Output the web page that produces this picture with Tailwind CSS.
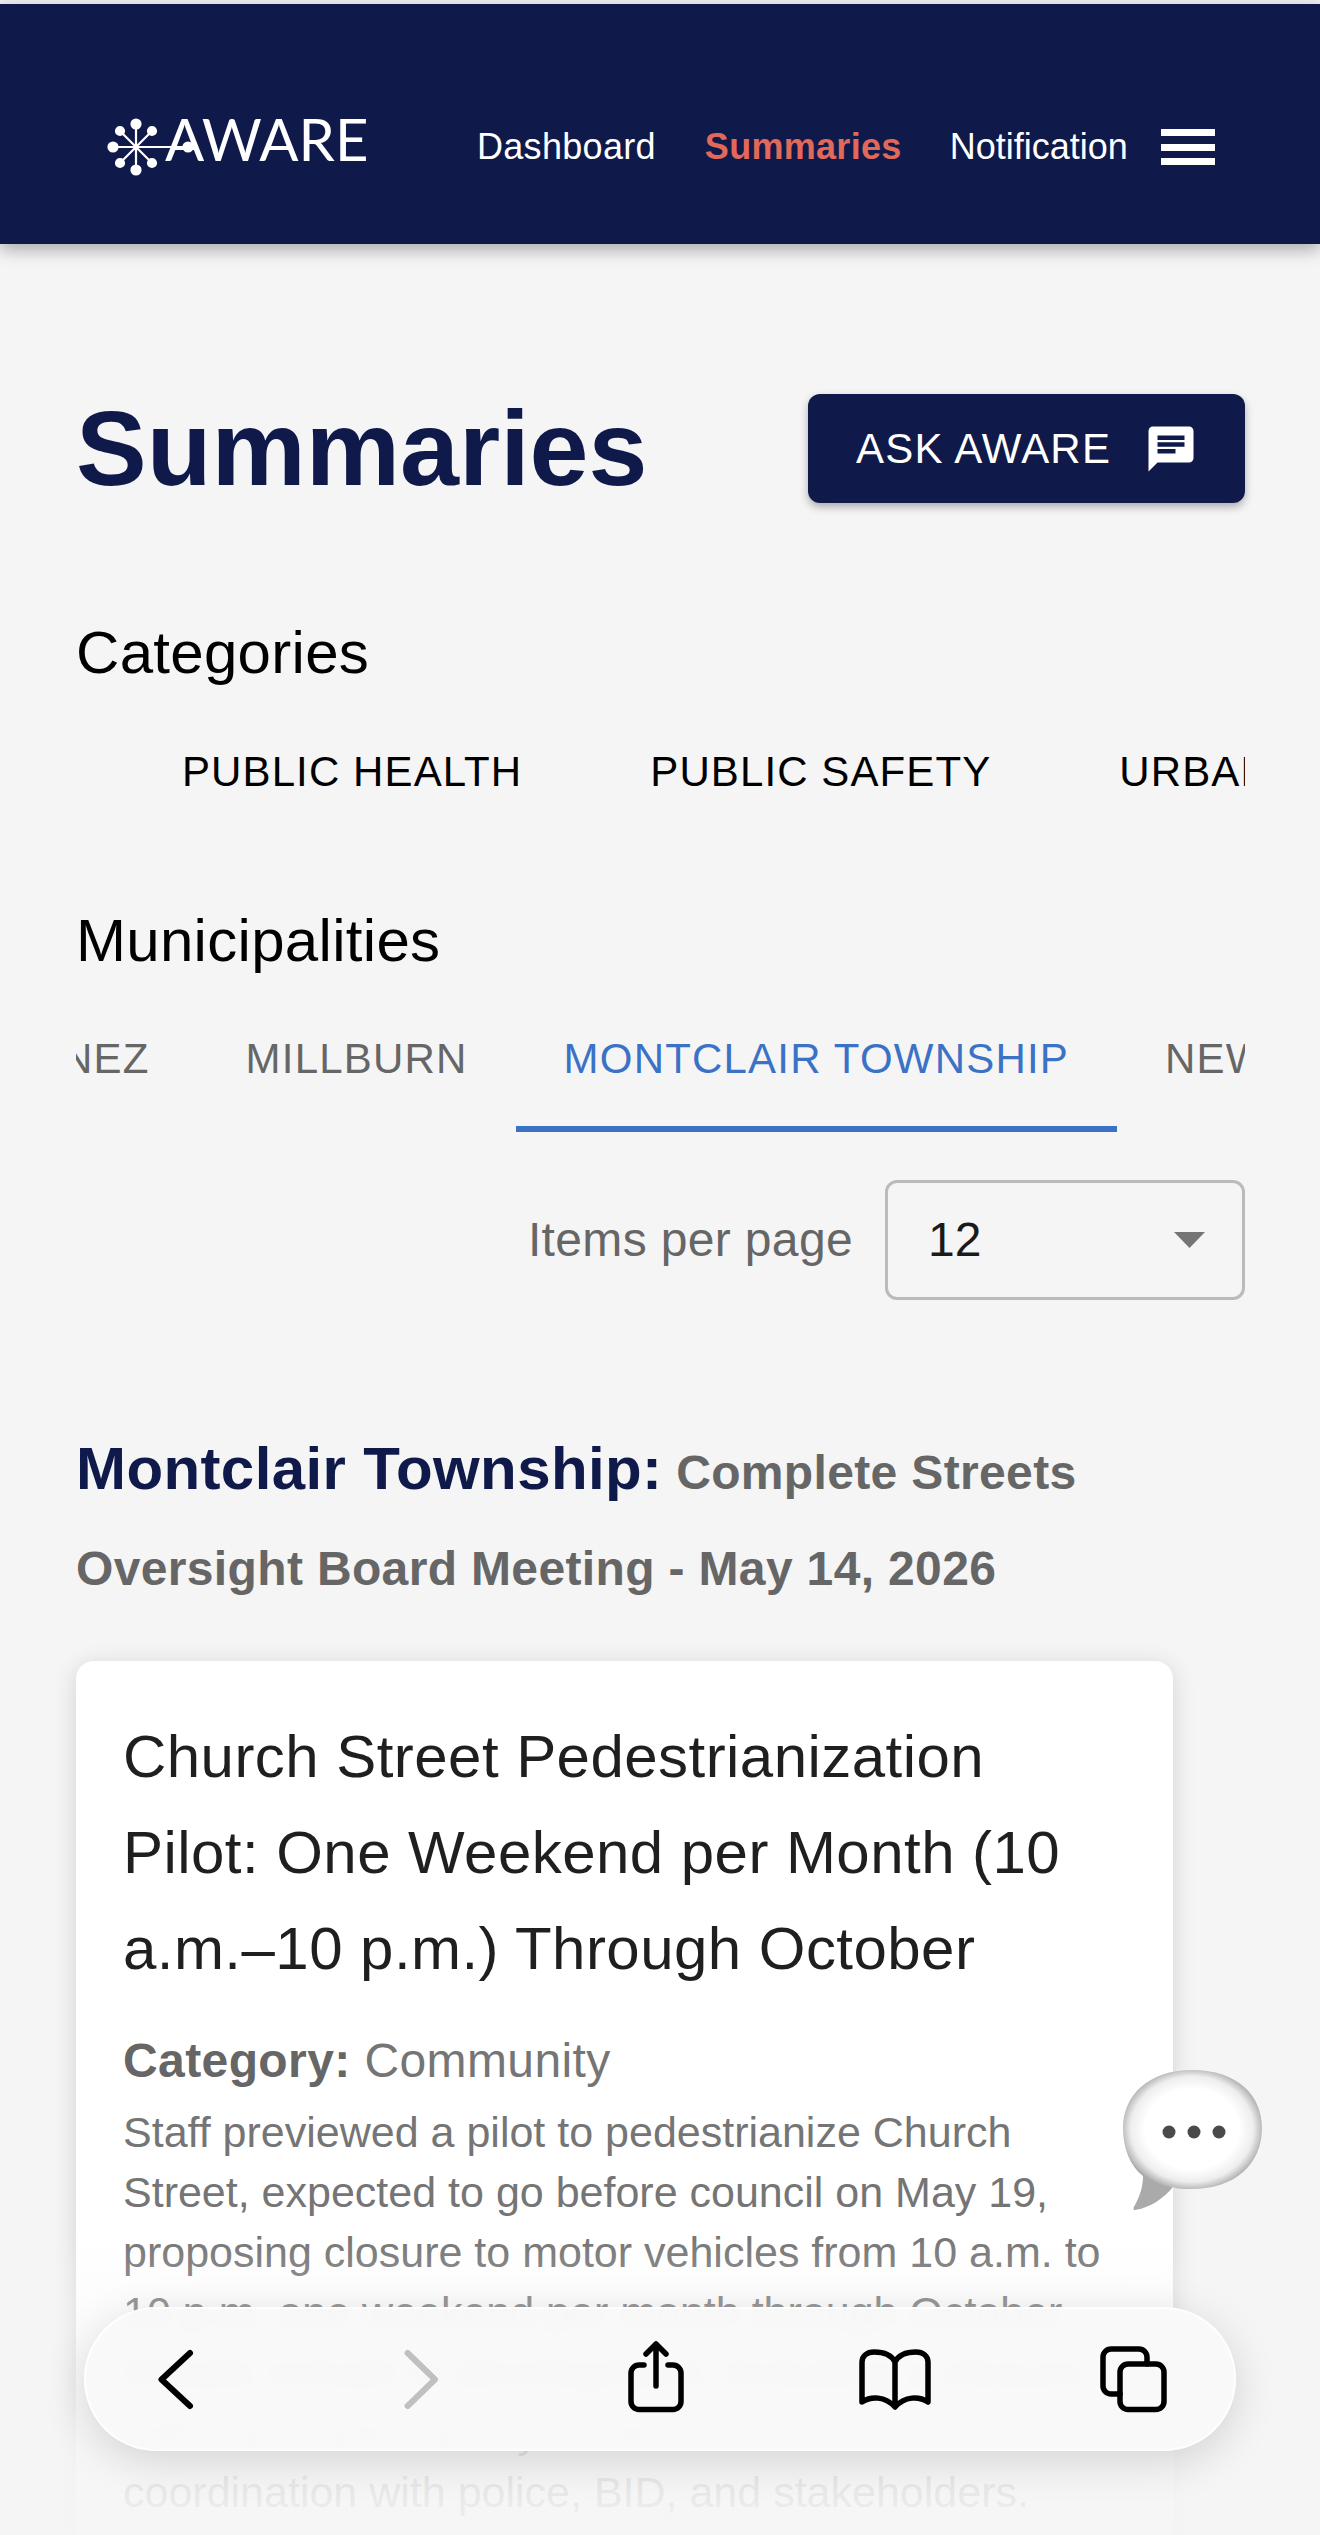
<!DOCTYPE html>
<html lang="en">
<head>
    <meta charset="utf-8" />
    <meta content="width=device-width, initial-scale=1.0" name="viewport" />
    <title>Summaries - AWARE</title>
    <script src="https://cdn.jsdelivr.net/npm/@tailwindcss/browser@4"></script>
</head>
<body class="bg-[#f5f5f5] font-['Liberation_Sans',Arial,sans-serif]">
<div class="relative h-[2535px] w-[1320px] overflow-hidden">
    <div class="h-1 bg-[#eeeef4]"></div>

    <!-- Header -->
    <header class="relative z-10 flex h-[240px] items-center bg-[#0f1a4b] pt-[46px] pl-[107px] text-[36px] leading-none text-white shadow-[0_6px_16px_rgba(0,0,0,0.3)]">
        <div class="flex w-[370px] items-center">
            <svg class="relative z-10 h-[60px] w-[86px]" viewBox="0 0 86 60" fill="#fff" stroke="#fff" stroke-width="2.2">
                <path d="M29 7V53M6 30H81M13 14L45 46M45 14L13 46" />
                <circle cx="29" cy="7" r="4.5" /><circle cx="29" cy="53" r="4.5" />
                <circle cx="6" cy="30" r="4.5" /><circle cx="81" cy="30" r="4.5" />
                <circle cx="13" cy="14" r="4" /><circle cx="45" cy="14" r="4" />
                <circle cx="13" cy="46" r="4" /><circle cx="45" cy="46" r="4" />
            </svg>
            <span class="-mt-[16px] -ml-[28px] font-['Lato',sans-serif] text-[58px] font-normal leading-none">AWARE</span>
        </div>
        <nav class="flex items-center">
            <a class="tracking-[0.3px]">Dashboard</a>
            <a class="ml-[49px] font-bold tracking-[0.3px] text-[#e2685a]">Summaries</a>
            <a class="ml-[48px]">Notification</a>
        </nav>
        <div class="ml-[33px] flex h-[36px] w-[54px] flex-col justify-between">
            <span class="h-[7px] bg-white"></span>
            <span class="h-[7px] bg-white"></span>
            <span class="h-[7px] bg-white"></span>
        </div>
    </header>

    <main class="pl-[76px] pr-[75px]">
        <!-- Title -->
        <div class="flex h-[109px] items-center justify-between mt-[150px]">
            <h1 class="-mt-[2px] text-[106px] font-bold leading-none text-[#0f1a4b]">Summaries</h1>
            <button class="flex h-[109px] w-[437px] items-center rounded-xl bg-[#0f1a4b] pl-[48px] text-[42px] tracking-[1.2px] text-white shadow-[0_4px_8px_rgba(0,0,0,0.3)]">
                ASK AWARE
                <svg class="ml-[33px] h-[54px] w-[54px]" viewBox="0 0 24 24" fill="#fff"><path d="M20 2H4c-1.1 0-1.99.9-1.99 2L2 22l4-4h14c1.1 0 2-.9 2-2V4c0-1.1-.9-2-2-2zM6 9h12v2H6V9zm8 5H6v-2h8v2zm4-6H6V6h12v2z"/></svg>
            </button>
        </div>

        <!-- Categories -->
        <h2 class="mt-[114px] text-[60px] leading-[72px] tracking-[0.3px] text-black">Categories</h2>
        <div class="mt-[47px] overflow-hidden">
            <div class="ml-[42px] flex w-max text-[42px] leading-[72px] tracking-[1.1px] text-black">
                <a class="px-[64px]">PUBLIC HEALTH</a>
                <a class="px-[64px]">PUBLIC SAFETY</a>
                <a class="px-[64px]">URBAN PLANNING</a>
            </div>
        </div>

        <!-- Municipalities -->
        <h2 class="mt-[97px] text-[60px] leading-[72px] tracking-[0.3px] text-black">Municipalities</h2>
        <div class="mt-[11px] overflow-hidden">
            <div class="-ml-[62px] flex w-max text-[42px] leading-none tracking-[1.2px] text-[#666]">
                <a class="flex h-[144px] items-center border-y-[6px] border-transparent px-[48px] pb-[2px]">NEZ</a>
                <a class="flex h-[144px] items-center border-y-[6px] border-transparent px-[48px] pb-[2px]">MILLBURN</a>
                <a class="flex h-[144px] items-center border-y-[6px] border-transparent border-b-[#3b72c6] px-[48px] pb-[2px] text-[#3b72c6]">MONTCLAIR TOWNSHIP</a>
                <a class="flex h-[144px] items-center border-y-[6px] border-transparent px-[48px] pb-[2px]">NEWARK</a>
            </div>
        </div>

        <!-- Items per page -->
        <div class="mt-[48px] flex items-center justify-end gap-[32px]">
            <span class="text-[48px] tracking-[0.35px] text-[#666]">Items per page</span>
            <div class="flex h-[120px] w-[360px] items-center rounded-xl border-[3px] border-[#bbb] pl-[40px] pr-[37px] text-[48px] text-[#1a1a1a]">
                12
                <svg class="ml-auto h-[16px] w-[31px]" viewBox="0 0 31 16" fill="#757575"><path d="M0 0H31L15.5 16Z"/></svg>
            </div>
        </div>

        <!-- Meeting heading -->
        <h3 class="mt-[121px] text-[48px] font-bold leading-[96px] tracking-[0.35px] text-[#666]">
            <span class="text-[60px] tracking-[0.4px] text-[#0f1a4b]">Montclair Township:</span> Complete Streets<br>Oversight Board Meeting - May 14, 2026
        </h3>

        <!-- Summary card -->
        <article class="mt-[44px] h-[1000px] w-[1097px] rounded-[18px] bg-white pl-[47px] pt-[48px] shadow-[0_4px_24px_rgba(0,0,0,0.14)]">
            <h4 class="text-[60px] leading-[96px] tracking-[0.45px] text-[#1f1f1f]">Church Street Pedestrianization<br>Pilot: One Weekend per Month (10<br>a.m.–10 p.m.) Through October</h4>
            <p class="mt-[34px] text-[48px] leading-[60px] tracking-[0.4px] text-[#757575]"><b class="text-[#666]">Category:</b> Community</p>
            <p class="mt-[11px] text-[43px] leading-[60px] text-[#757575]">
                Staff previewed a pilot to pedestrianize Church<br>
                Street, expected to go before council on May 19,<br>
                proposing closure to motor vehicles from 10 a.m. to<br>
                10 p.m. one weekend per month through October<br>
                Details remain in development, including a closure<br>
                with barricades at key locations and close<br>
                coordination with police, BID, and stakeholders.
            </p>
        </article>
    </main>

    <!-- Browser fade at the bottom edge -->
    <div class="absolute bottom-0 left-0 z-20 h-[300px] w-full bg-gradient-to-b from-[#f5f5f5]/0 via-[#f5f5f5]/85 via-70% to-[#f5f5f5]/95"></div>

    <!-- Speech bubble -->
    <svg class="absolute left-[1120px] top-[2066px] z-30 h-[145px] w-[145px]" viewBox="0 0 145 145">
        <defs>
            <radialGradient id="bubble" gradientUnits="userSpaceOnUse" cx="0" cy="0" r="1" gradientTransform="translate(72 63) scale(72 62)">
                <stop offset="0.65" stop-color="#fff" />
                <stop offset="0.85" stop-color="#eeeeee" />
                <stop offset="0.97" stop-color="#bbbbbb" />
                <stop offset="1" stop-color="#aaaaaa" />
            </radialGradient>
        </defs>
        <path fill="url(#bubble)" d="M72 4C118 4 142 30 142 62C142 98 115 123 72 123C64 123 58 123 53 121C44 132 30 142 15 144C13 144 13 142 15 139C20 130 23 120 23 110C10 100 3 82 3 62C3 30 28 4 72 4Z" />
        <circle cx="49" cy="66" r="6.5" fill="#4a4a4a" />
        <circle cx="74" cy="66" r="6.5" fill="#4a4a4a" />
        <circle cx="99" cy="66" r="6.5" fill="#4a4a4a" />
    </svg>

    <!-- Safari toolbar -->
    <div class="absolute left-[84px] top-[2307px] z-40 flex h-[144px] w-[1152px] items-center rounded-[72px] border-2 border-white/80 bg-[#f9f9f9]/95 pl-[70px] shadow-[0_10px_44px_rgba(0,0,0,0.14)] backdrop-blur-sm">
        <svg class="h-[70px] w-[42px]" viewBox="0 0 42 70" fill="none" stroke="#000" stroke-width="6" stroke-linecap="round" stroke-linejoin="round"><path d="M34 9L5.500 35.500L34 62"/></svg>
        <svg class="ml-[203px] h-[70px] w-[42px]" viewBox="0 0 42 70" fill="none" stroke="#c0c0c0" stroke-width="6" stroke-linecap="round" stroke-linejoin="round"><path d="M6.600 9L34 35.500L6.600 62"/></svg>
        <svg class="ml-[181px] h-[70px] w-[64px] overflow-visible" viewBox="0 0 64 70" fill="none" stroke="#000" stroke-width="5.5" stroke-linecap="round" stroke-linejoin="round">
            <path d="M20 21H15a8 8 0 0 0-8 8V57.500a8 8 0 0 0 8 8H49a8 8 0 0 0 8-8V29a8 8 0 0 0-8-8H44" />
            <path d="M32 0V42M22 10L32 0L42 10" />
        </svg>
        <svg class="ml-[171px] h-[70px] w-[72px]" viewBox="0 0 72 70" fill="none" stroke="#000" stroke-width="5.5" stroke-linecap="round" stroke-linejoin="round">
            <path d="M36 18C32 10 24 8 15 8C8 8 3 12 3 18V58C12 52 26 52 36 63C46 52 60 52 69 58V18C69 12 64 8 57 8C48 8 40 10 36 18ZM36 18V62" />
        </svg>
        <svg class="ml-[166px] h-[70px] w-[73px]" viewBox="0 0 73 70" fill="none" stroke="#000" stroke-width="5.5" stroke-linecap="round" stroke-linejoin="round">
            <path d="M50 20V13a8 8 0 0 0-8-8H14a8 8 0 0 0-8 8V42a8 8 0 0 0 8 8H23" />
            <rect x="23" y="20" width="44" height="45.500" rx="8" />
        </svg>
    </div>
</div>
</body>
</html>
